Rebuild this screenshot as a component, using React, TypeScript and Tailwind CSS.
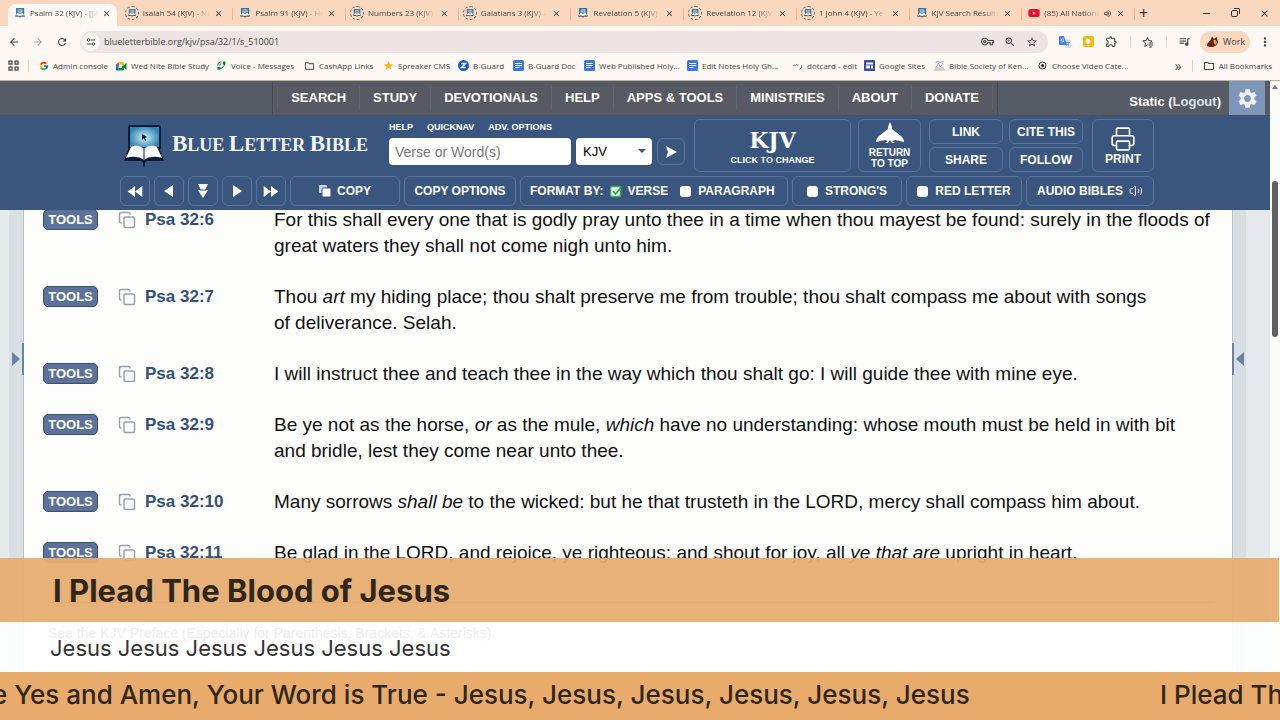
import type { ReactNode } from "react";
import clsx from "clsx";
import { FcGoogle } from "react-icons/fc";
import { FaYoutube } from "react-icons/fa";
import {
  MdArrowBack,
  MdArrowForward,
  MdClose,
  MdLightbulb,
  MdMoreVert,
  MdOutlineExtension,
  MdOutlineFolder,
  MdOutlineVolumeUp,
  MdOutlineVpnKey,
  MdPhoneInTalk,
  MdQueueMusic,
  MdRefresh,
  MdSettings,
  MdStar,
  MdStarBorder,
  MdZoomIn,
} from "react-icons/md";
import { Copy, Printer, Volume2 } from "lucide-react";

interface Tab {
  title: string;
  icon: "blb" | "blb-idle" | "youtube";
  audio?: boolean;
}

const TABS: Tab[] = [
  { title: "Psalm 32 (KJV) - [[A", icon: "blb" },
  { title: "Isaiah 54 (KJV) - No", icon: "blb-idle" },
  { title: "Psalm 91 (KJV) - He", icon: "blb" },
  { title: "Numbers 23 (KJV)", icon: "blb-idle" },
  { title: "Galatians 3 (KJV) -", icon: "blb-idle" },
  { title: "Revelation 5 (KJV)", icon: "blb" },
  { title: "Revelation 12 (KJV)", icon: "blb-idle" },
  { title: "1 John 4 (KJV) - Ye", icon: "blb-idle" },
  { title: "KJV Search Results", icon: "blb" },
  { title: "(85) All Nations", icon: "youtube", audio: true },
];

const BOOKMARKS: { label: string; icon: ReactNode; width: string }[] = [
  { label: "Admin console", icon: <FcGoogle size={10} />, width: "w-[78px]" },
  { label: "Wed Nite Bible Study", icon: <MeetIcon />, width: "w-[100px]" },
  { label: "Voice - Messages", icon: <MdPhoneInTalk size={11} className="-scale-x-100 text-green-700" />, width: "w-[88px]" },
  { label: "CashApp Links", icon: <MdOutlineFolder size={12} />, width: "w-[79px]" },
  { label: "Spreaker CMS", icon: <MdStar size={11} className="text-[#f5b80c]" />, width: "w-[75px]" },
  { label: "B-Guard", icon: <ZIcon />, width: "w-[55px]" },
  { label: "B-Guard Doc", icon: <DocIcon />, width: "w-[71px]" },
  { label: "Web Published Holy...", icon: <DocIcon />, width: "w-[103px]" },
  { label: "Edit Notes Holy Gh...", icon: <DocIcon />, width: "w-[105px]" },
  { label: "dotcard - edit", icon: <DotcardIcon />, width: "w-[72px]" },
  { label: "Google Sites", icon: <SitesIcon />, width: "w-[70px]" },
  { label: "Bible Society of Ken...", icon: <SocietyIcon />, width: "w-[103px]" },
  { label: "Choose Video Cate...", icon: <TargetIcon />, width: "w-[100px]" },
];

const NAV = ["SEARCH", "STUDY", "DEVOTIONALS", "HELP", "APPS & TOOLS", "MINISTRIES", "ABOUT", "DONATE"];

const VERSES: { ref: string; text: ReactNode }[] = [
  {
    ref: "Psa 32:6",
    text: "For this shall every one that is godly pray unto thee in a time when thou mayest be found: surely in the floods of great waters they shall not come nigh unto him.",
  },
  {
    ref: "Psa 32:7",
    text: (
      <>
        Thou <em>art</em> my hiding place; thou shalt preserve me from trouble; thou shalt compass me about with songs
        of&nbsp;deliverance. Selah.
      </>
    ),
  },
  {
    ref: "Psa 32:8",
    text: "I will instruct thee and teach thee in the way which thou shalt go: I will guide thee with mine eye.",
  },
  {
    ref: "Psa 32:9",
    text: (
      <>
        Be ye not as the horse, <em>or</em> as the mule, <em>which</em> have no understanding: whose mouth must be held
        in with bit and&nbsp;bridle, lest they come near unto thee.
      </>
    ),
  },
  {
    ref: "Psa 32:10",
    text: (
      <>
        Many sorrows <em>shall be</em> to the wicked: but he that trusteth in the LORD, mercy shall compass him about.
      </>
    ),
  },
  {
    ref: "Psa 32:11",
    text: (
      <>
        Be glad in the LORD, and rejoice, ye righteous: and shout for joy, all <em>ye that are</em> upright in heart.
      </>
    ),
  },
];

function MeetIcon() {
  return (
    <svg width="11" height="10" viewBox="0 0 11 10">
      <path d="M0 3.5 3 1v3.500H0z" fill="#ea4335" />
      <path d="M0 3.5h2.600V7H0z" fill="#1a73e8" />
      <path d="M0 7h2.600v2.500H1A1 1 0 0 1 0 8.500z" fill="#1557b0" />
      <path d="M2.600 1H7a1 1 0 0 1 1 1v2L6 5V3.500H2.600z" fill="#fbbc04" />
      <path d="M2.600 7H6V5l2-1 2.500-2.200v7L8 7v1.500a1 1 0 0 1-1 1H2.600z" fill="#0b8f3c" />
    </svg>
  );
}

function ZIcon() {
  return (
    <svg width="11" height="11" viewBox="0 0 22 22">
      <circle cx="11" cy="11" r="11" fill="#1557c8" />
      <path d="M6 7h9l-8 8h9" fill="none" stroke="#fff" strokeWidth="3" />
    </svg>
  );
}

function DocIcon() {
  return (
    <svg width="11" height="11" viewBox="0 0 22 22">
      <rect width="22" height="22" rx="3" fill="#3b78e0" />
      <path d="M4 7h14M4 11h14M4 15h9" stroke="#fff" strokeWidth="2" />
    </svg>
  );
}

function DotcardIcon() {
  return (
    <svg width="10" height="10" viewBox="0 0 20 20" fill="none" stroke="#555" strokeWidth="2">
      <path d="M1 9c2-3 3 2 5-1s3 3 5 0" />
      <path d="M17 9c1 4-1 6-4 7" />
    </svg>
  );
}

function SitesIcon() {
  return (
    <svg width="11" height="11" viewBox="0 0 22 22">
      <rect width="22" height="22" rx="2" fill="#3a4aa8" />
      <path d="M4 5h14v4H4zM4 11h8v6H4zM14 11h4v6h-4z" fill="#fff" />
    </svg>
  );
}

function SocietyIcon() {
  return (
    <svg width="11" height="11" viewBox="0 0 22 22" fill="none" stroke="#8a8f9c" strokeWidth="1.500">
      <path d="M3 5 8 3l4 2 7-2M4 15 9 6l3 8 6-8M2 16h18M0 20h22" />
    </svg>
  );
}

function TargetIcon() {
  return (
    <svg width="9" height="9" viewBox="0 0 18 18">
      <circle cx="9" cy="9" r="7" fill="none" stroke="#333" strokeWidth="2" />
      <circle cx="9" cy="9" r="3" fill="#222" />
    </svg>
  );
}

function TuneIcon() {
  return (
    <svg width="10" height="10" viewBox="0 0 20 20" fill="none" stroke="#444" strokeWidth="2">
      <circle cx="5" cy="6" r="2.500" />
      <path d="M9 6h9M2 14h9" />
      <circle cx="15" cy="14" r="2.500" />
    </svg>
  );
}

function TranslateIcon() {
  return (
    <svg width="12" height="12" viewBox="0 0 24 24">
      <path d="M8 7h14a2 2 0 0 1 2 2v13a2 2 0 0 1-2 2h-9z" fill="#d5dbe5" />
      <path d="M14 13h8M18 11v2M20 13c-1 3-3 5-5 6M16 15c1 2 2 3 4 4" stroke="#5b79a8" strokeWidth="1.500" fill="none" />
      <path d="M2 0h8l6 18H2a2 2 0 0 1-2-2V2a2 2 0 0 1 2-2z" fill="#4383ee" />
      <path d="M10 7a3 3 0 1 0 0 3H7" stroke="#fff" strokeWidth="1.500" fill="none" />
    </svg>
  );
}

function BookmarkListIcon() {
  return (
    <svg width="12" height="12" viewBox="0 0 24 24" fill="none" stroke="currentColor" strokeWidth="2">
      <path d="M16 9.500 13.500 9 11 3 8.500 9 2 9.500l5 4.500-1.500 7L11 17.500" />
      <path d="M16 9.500l4 .5-3 2.500M13 14h9M13 18h9M14 22h6" />
    </svg>
  );
}

function BlbMark({ className }: { className: string }) {
  return (
    <svg viewBox="0 0 40 42" className={className}>
      <defs>
        <radialGradient id="screen">
          <stop offset="0" stopColor="#d3eef8" />
          <stop offset="1" stopColor="#2f86b4" />
        </radialGradient>
      </defs>
      <rect x="5" y="1" width="31" height="23" rx="1" fill="url(#screen)" stroke="#0b1c3a" strokeWidth="2" />
      <path d="M18 9l5 3-2 1 1 2-1 1-1-3-2 2z" fill="#0d1a2e" />
      <path d="M5 22 0 36h17c1 0 2 2 3 2s2-2 3-2h17L35 22z" fill="#0b1c3a" />
      <path d="M7 22c3-2 9-2 13 2 4-4 10-4 13-2l5 11c-6-2-13-2-18 2-5-4-12-4-18-2z" fill="#fff" />
      <path d="M20 24v11" stroke="#0b1c3a" />
      <path d="M19 37h2v5l-1-1-1 1z" fill="#0b1c3a" />
    </svg>
  );
}

function TabIcon({ icon }: { icon: Tab["icon"] }) {
  if (icon === "youtube") return <FaYoutube size={12} className="shrink-0 text-[#e60f33]" />;
  if (icon === "blb") return <BlbMark className="h-2.5 w-3 shrink-0" />;
  return (
    <span className="-ml-0.5 flex size-3.5 shrink-0 items-center justify-center rounded-full border border-dashed border-[#6b625c]">
      <BlbMark className="size-2" />
    </span>
  );
}

function BrowserChrome() {
  return (
    <div className="shrink-0 border-b border-[#b9b4a6] bg-[#fdf8f4] font-['Open_Sans',sans-serif] text-[8px] text-[#474340]">
      <div className="flex h-[26px] bg-[#fad8bf] pl-2">
        <div className="grid max-w-[1127px] flex-1 grid-cols-10">
          {TABS.map((tab, i) => (
            <div
              key={tab.title}
              className={clsx(
                "relative mt-1 flex items-center gap-1 pb-1 pl-1.5",
                i === 0 && "mr-1 rounded-t-lg bg-[#fdf8f4]",
              )}
            >
              <TabIcon icon={tab.icon} />
              <span className="w-0 flex-1 overflow-hidden whitespace-nowrap [mask-image:linear-gradient(to_right,black_75%,transparent)]">
                {tab.title}
              </span>
              {tab.audio && <MdOutlineVolumeUp size={9} />}
              <button aria-label={`Close ${tab.title}`} className={clsx("text-[#333]", i === 0 ? "mr-1.5" : "mr-2.5")}>
                <MdClose size={9} />
              </button>
              {i > 0 && <span className="absolute top-1 right-0 h-3 w-px bg-[#efb690]" />}
            </div>
          ))}
        </div>
        <button aria-label="New tab" className="ml-1 text-base leading-none text-[#333]">
          +
        </button>
        <div className="ml-auto flex items-center gap-[21px] pr-2.5 text-[#333]">
          <button aria-label="Minimize" className="h-px w-[7px] bg-[#333]" />
          <button aria-label="Restore" className="relative size-[7px] rounded-xs border border-[#333]">
            <span className="absolute -top-[3px] left-0.5 size-[6px] rounded-tr-xs border-t border-r border-[#333]" />
          </button>
          <button aria-label="Close window">
            <MdClose size={11} />
          </button>
        </div>
      </div>

      {/* Address row */}
      <div className="flex h-[31px] items-center px-2">
        <button aria-label="Back">
          <MdArrowBack size={12} />
        </button>
        <button aria-label="Forward" className="ml-3 text-[#a59f9a]">
          <MdArrowForward size={12} />
        </button>
        <button aria-label="Reload" className="ml-3">
          <MdRefresh size={12} />
        </button>
        <div className="ml-3 flex h-[22px] flex-1 items-center rounded-full bg-[#ede3e2] pr-2.5 pl-0.5">
          <span className="flex size-[18px] items-center justify-center rounded-full bg-[#fdf8f4]">
            <TuneIcon />
          </span>
          <input
            aria-label="Address"
            defaultValue="blueletterbible.org/kjv/psa/32/1/s_510001"
            className="ml-1 flex-1 bg-transparent text-[9px] outline-none"
          />
          <MdOutlineVpnKey size={13} />
          <MdZoomIn size={12} className="ml-2.5" />
          <MdStarBorder size={12} className="ml-2.5" />
        </div>
        <div className="mr-[9px] ml-[11px] flex w-[132px] items-center justify-between">
          <TranslateIcon />
          <span className="flex size-[11px] items-center justify-center rounded-xs bg-[#f4b912] text-white">
            <MdLightbulb size={8} />
          </span>
          <MdOutlineExtension size={13} />
          <span className="h-3 w-px bg-[#f0d4c2]" />
          <BookmarkListIcon />
          <span className="h-3 w-px bg-[#f0d4c2]" />
          <MdQueueMusic size={13} />
        </div>
        <button className="flex h-[22px] w-[50px] items-center gap-1 rounded-full bg-[#fad8bf] pl-1.5 text-[9px]">
          <svg width="13" height="12" viewBox="0 0 26 24">
            <path d="M2 18C4 8 8 12 10 6l2-5 4 5 5-4 3 10c-2 10-14 12-22 8z" fill="#6b2412" />
            <path d="M15 8c4-2 8 4 6 8s-6 0-6-8z" fill="#e3a04e" />
            <path d="M1 8c2-4 6-4 7-2l-4 8z" fill="#f6ebe2" />
          </svg>
          Work
        </button>
        <button aria-label="Menu" className="ml-2">
          <MdMoreVert size={14} />
        </button>
      </div>

      {/* Bookmarks row */}
      <div className="flex h-[23px] items-center pb-1.5 pl-2">
        <svg width="11" height="11" viewBox="0 0 22 22" fill="none" stroke="#444" strokeWidth="2.500">
          <path d="M2 2h6v6H2zM14 2h6v6h-6zM2 14h6v6H2zM14 14h6v6h-6z" />
        </svg>
        <span className="mx-[9px] h-3 w-px bg-[#f0c9ae]" />
        <div className="flex flex-1 overflow-hidden whitespace-nowrap">
          {BOOKMARKS.map((b) => (
            <a key={b.label} href="#" className={clsx("flex shrink-0 items-center gap-1", b.width)}>
              <span className="flex w-[11px] shrink-0 justify-center">{b.icon}</span>
              {b.label}
            </a>
          ))}
        </div>
        <button aria-label="More bookmarks" className="text-sm leading-none">
          »
        </button>
        <span className="mx-2.5 h-3 w-px bg-[#f0c9ae]" />
        <a href="#" className="flex items-center gap-1 pr-2">
          <MdOutlineFolder size={12} />
          All Bookmarks
        </a>
      </div>
    </div>
  );
}

function SiteNav() {
  return (
    <nav className="relative flex h-[35px] shrink-0 justify-center border-b border-[#46505f] bg-[#555c66] text-[13px] font-bold text-white">
      <div className="flex items-center border-x border-[#474d57] bg-[#575a63] px-1">
        {NAV.map((item) => (
          <a key={item} href="#" className="border-r border-[#61646d] px-[13px] py-1 leading-4 first:border-l">
            {item}
          </a>
        ))}
      </div>
      <div className="absolute inset-y-0 right-[5px] flex items-center gap-2">
        <span className="pt-2">
          Static (
          <a href="#" className="text-[#dfe4ea]">
            Logout
          </a>
          )
        </span>
        <button aria-label="Settings" className="flex h-full w-9 items-center justify-center bg-[#8096b8] text-[#eef2f8]">
          <MdSettings size={23} />
        </button>
      </div>
    </nav>
  );
}

function HeaderButton({ className, label, children }: { className?: string; label?: string; children: ReactNode }) {
  return (
    <button
      aria-label={label}
      className={clsx("flex items-center justify-center rounded-md border border-[#57739d] font-bold", className)}
    >
      {children}
    </button>
  );
}

function ToggleBox({ id, label, checked }: { id: string; label: string; checked?: boolean }) {
  return (
    <label htmlFor={id} className="flex items-center gap-[7px]">
      <span className="relative flex">
        <input
          id={id}
          type="checkbox"
          defaultChecked={checked}
          className="size-[11px] appearance-none rounded-[3px] bg-white"
        />
        {checked && (
          <svg width="13" height="13" viewBox="0 0 26 26" className="absolute -top-px left-0" fill="none">
            <rect x="1" y="3" width="20" height="20" rx="4" stroke="#3fae5a" strokeWidth="3" fill="#e8f7ea" />
            <path d="M6 12l5 6L24 3" stroke="#2fa04c" strokeWidth="3.500" />
          </svg>
        )}
      </span>
      {label}
    </label>
  );
}

function SiteHeader() {
  return (
    <header className="shrink-0 bg-[#3a567f] pt-[3px] pb-1 pl-1 text-xs text-white">
      <div className="mx-auto max-w-[1034px]">
        <div className="flex h-[53px]">
          <a href="#" className="flex w-[269px] items-center gap-2 pl-1 font-['Liberation_Serif',serif] font-bold">
            <BlbMark className="h-[42px] w-10" />
            <span className="pb-1 text-lg whitespace-nowrap text-[#f1f5fb]">
              <span className="text-[23px]">B</span>LUE <span className="text-[23px]">L</span>ETTER{" "}
              <span className="text-[23px]">B</span>IBLE
            </span>
          </a>
          <div className="w-[305px]">
            <div className="flex h-[19px] items-start gap-3.5 text-[9px] leading-4 font-bold">
              <a href="#">HELP</a>
              <a href="#">QUICKNAV</a>
              <a href="#">ADV. OPTIONS</a>
            </div>
            <div className="flex h-[27px] gap-[5px]">
              <input
                aria-label="Verse or Word(s)"
                placeholder="Verse or Word(s)"
                className="w-[182px] rounded-sm bg-white px-1.5 text-sm text-black placeholder:text-[#777]"
              />
              <span className="relative w-[76px]">
                <select
                  aria-label="Translation"
                  className="size-full appearance-none rounded-sm bg-white px-[7px] text-[13px] text-black"
                >
                  <option>KJV</option>
                </select>
                <span className="absolute top-[11px] right-1.5 border-x-4 border-t-4 border-x-transparent border-t-[#3a567f]" />
              </span>
              <HeaderButton label="Search" className="w-7 border-[#9db3d3]">
                <svg width="12" height="12" viewBox="0 0 12 12" fill="#fff">
                  <path d="M1 0l11 6L1 12l2-6z" />
                </svg>
              </HeaderButton>
            </div>
          </div>
          <HeaderButton className="w-[157px] flex-col pt-1">
            <span className="font-['DejaVu_Serif',serif] text-[22px] leading-6">KJV</span>
            <span className="text-[9px] leading-4">CLICK TO CHANGE</span>
          </HeaderButton>
          <HeaderButton className="ml-[7px] w-[63px] flex-col text-[10px] leading-[11px]">
            <svg width="28" height="21" viewBox="0 0 28 21" fill="#fff" className="mb-1">
              <path d="M14 0c1 2 2 4 2 7l9 7c2 2 3 4 3 6l-9-2-3 1 3 2h-3l-2-3-2 3H9l3-2-3-1-9 2c0-2 1-4 3-6l9-7c0-3 1-5 2-7z" />
            </svg>
            <span>RETURN</span>
            <span>TO TOP</span>
          </HeaderButton>
          <div className="ml-2 grid w-[154px] grid-cols-2 gap-x-1.5 gap-y-[3px]">
            <HeaderButton>LINK</HeaderButton>
            <HeaderButton>CITE THIS</HeaderButton>
            <HeaderButton>SHARE</HeaderButton>
            <HeaderButton>FOLLOW</HeaderButton>
          </div>
          <HeaderButton className="ml-[9px] w-[62px] flex-col">
            <Printer size={26} strokeWidth={1.5} />
            <span className="leading-[14px]">PRINT</span>
          </HeaderButton>
        </div>

        <div className="mt-1 flex h-[30px] gap-1">
          <HeaderButton label="Previous book" className="w-[30px]">
            <svg width="16" height="11" viewBox="0 0 16 12" fill="#fff">
              <path d="M8 0v12L0 6zM16 0v12L8 6z" />
            </svg>
          </HeaderButton>
          <HeaderButton label="Previous chapter" className="w-[30px]">
            <svg width="10" height="12" viewBox="0 0 10 12" fill="#fff">
              <path d="M9 0v12L0 6z" />
            </svg>
          </HeaderButton>
          <HeaderButton label="Jump to verse" className="w-[30px]">
            <svg width="10" height="14" viewBox="0 0 10 14" fill="#fff">
              <path d="M0 0h10L7 6h3l-5 8-5-8h3z" />
              <path d="M2 6h6" stroke="#3a567f" />
            </svg>
          </HeaderButton>
          <HeaderButton label="Next chapter" className="w-[30px]">
            <svg width="10" height="12" viewBox="0 0 10 12" fill="#fff">
              <path d="M1 0v12l9-6z" />
            </svg>
          </HeaderButton>
          <HeaderButton label="Next book" className="w-[30px]">
            <svg width="16" height="11" viewBox="0 0 16 12" fill="#fff">
              <path d="M0 0v12l8-6zM8 0v12l8-6z" />
            </svg>
          </HeaderButton>
          <HeaderButton className="w-[110px] gap-1.5">
            <svg width="12" height="12" viewBox="0 0 12 12">
              <rect width="8" height="8" rx="1" fill="#c9d3e2" />
              <rect x="3" y="3" width="9" height="9" rx="1" fill="#fff" stroke="#3a567f" />
            </svg>
            COPY
          </HeaderButton>
          <HeaderButton className="w-28">COPY OPTIONS</HeaderButton>
          <div className="flex w-[268px] items-center rounded-md border border-[#57739d] pl-[9px] font-bold whitespace-nowrap">
            <span className="mr-1.5">FORMAT BY:</span>
            <ToggleBox id="fmt-verse" label="VERSE" checked />
            <span className="w-3" />
            <ToggleBox id="fmt-paragraph" label="PARAGRAPH" />
          </div>
          <div className="flex w-[110px] items-center justify-center rounded-md border border-[#57739d] font-bold">
            <ToggleBox id="strongs" label="STRONG'S" />
          </div>
          <div className="flex w-[116px] items-center justify-center rounded-md border border-[#57739d] font-bold">
            <ToggleBox id="red-letter" label="RED LETTER" />
          </div>
          <HeaderButton className="w-32 gap-1.5">
            AUDIO BIBLES
            <Volume2 size={14} strokeWidth={1.5} />
          </HeaderButton>
        </div>
      </div>
    </header>
  );
}

function Passage() {
  return (
    <main className="flex min-h-0 flex-1 overflow-hidden">
      <aside className="relative w-6 shrink-0 border-r border-[#b9c3d0] bg-[#d9dfe2]">
        <div className="h-full w-[9px] bg-[#e4e9e9]" />
        <button
          aria-label="Open left panel"
          className="absolute top-[133px] -right-px flex h-8 w-3 items-center border-r-2 border-[#6b80a5]"
        >
          <span className="border-y-[7px] border-l-8 border-y-transparent border-l-[#6b7fa8]" />
        </button>
      </aside>

      <div className="min-w-0 flex-1 px-[19px]">
        <div className="-mt-[3px] flex flex-col gap-[25px]">
          {VERSES.map((v) => (
            <div key={v.ref} className="flex text-[19px] leading-[26px]">
              <button className="mt-0.5 h-[21px] w-[55px] shrink-0 rounded-[5px] border border-[#3b4f73] bg-[#5d7299] text-[13px] leading-[18px] font-bold text-white">
                TOOLS
              </button>
              <button aria-label={`Copy ${v.ref}`} className="ml-5 flex w-[27px] shrink-0 pt-1 text-[#9aa0aa]">
                <Copy size={18} strokeWidth={2} />
              </button>
              <a href="#" className="w-[129px] shrink-0 text-[17px] font-bold text-[#354f7d]">
                {v.ref}
              </a>
              <p className="max-w-[940px] text-[#111]">{v.text}</p>
            </div>
          ))}
        </div>
        <hr className="mt-9 ml-1 border-[#8f9bb0]" />
        <p className="mt-5 ml-[5px] text-sm text-[#444]">
          See the KJV Preface (Especially for Parenthesis, Brackets, &amp; Asterisks).
        </p>
      </div>

      <aside className="relative flex w-[38px] shrink-0 justify-end border-l border-[#b9c3d0] bg-[#d8dfe3]">
        <div className="h-full w-6 bg-[#e5e9eb]" />
        <button
          aria-label="Open right panel"
          className="absolute top-[133px] -left-px flex h-8 w-3 items-center justify-end border-l-2 border-[#6b80a5]"
        >
          <span className="border-y-[7px] border-r-8 border-y-transparent border-r-[#6b7fa8]" />
        </button>
      </aside>
    </main>
  );
}

function LowerThird() {
  return (
    <div className="absolute inset-x-0 bottom-0 font-[Inter,sans-serif] whitespace-nowrap text-[#2f271c]">
      <div className="mr-px flex h-16 items-center bg-[#e7ad70]/95 pt-0.5 pl-[53px] text-[31px] font-bold">
        I Plead The Blood of Jesus
      </div>
      <div className="h-[50px] bg-white/90 pl-[50px] text-[22px] leading-[52px] text-[#333]">
        Jesus Jesus Jesus Jesus Jesus Jesus
      </div>
      <div className="flex h-12 overflow-hidden bg-[#e8ab6c] text-[26px] leading-[46px] font-medium">
        <span className="-ml-2 w-[1168px] shrink-0">
          e Yes and Amen, Your Word is True - Jesus, Jesus, Jesus, Jesus, Jesus, Jesus
        </span>
        <span>I Plead The Blood of Jesus</span>
      </div>
    </div>
  );
}

export default function App() {
  return (
    <div className="relative flex h-screen flex-col overflow-hidden bg-[#fdfefc] font-['Liberation_Sans',Arial,sans-serif]">
      <BrowserChrome />
      <div className="flex min-h-0 flex-1">
        <div className="flex min-w-0 flex-1 flex-col">
          <SiteNav />
          <SiteHeader />
          <Passage />
        </div>
        {/* Page scrollbar */}
        <div className="w-2.5 shrink-0 bg-[#fbfbfa] px-0.5 pt-1">
          <div className="mx-auto size-0 border-x-3 border-b-4 border-x-transparent border-b-[#777]" />
          <div className="mt-[92px] h-[156px] rounded-full bg-[#606060]" />
        </div>
      </div>
      <LowerThird />
    </div>
  );
}
